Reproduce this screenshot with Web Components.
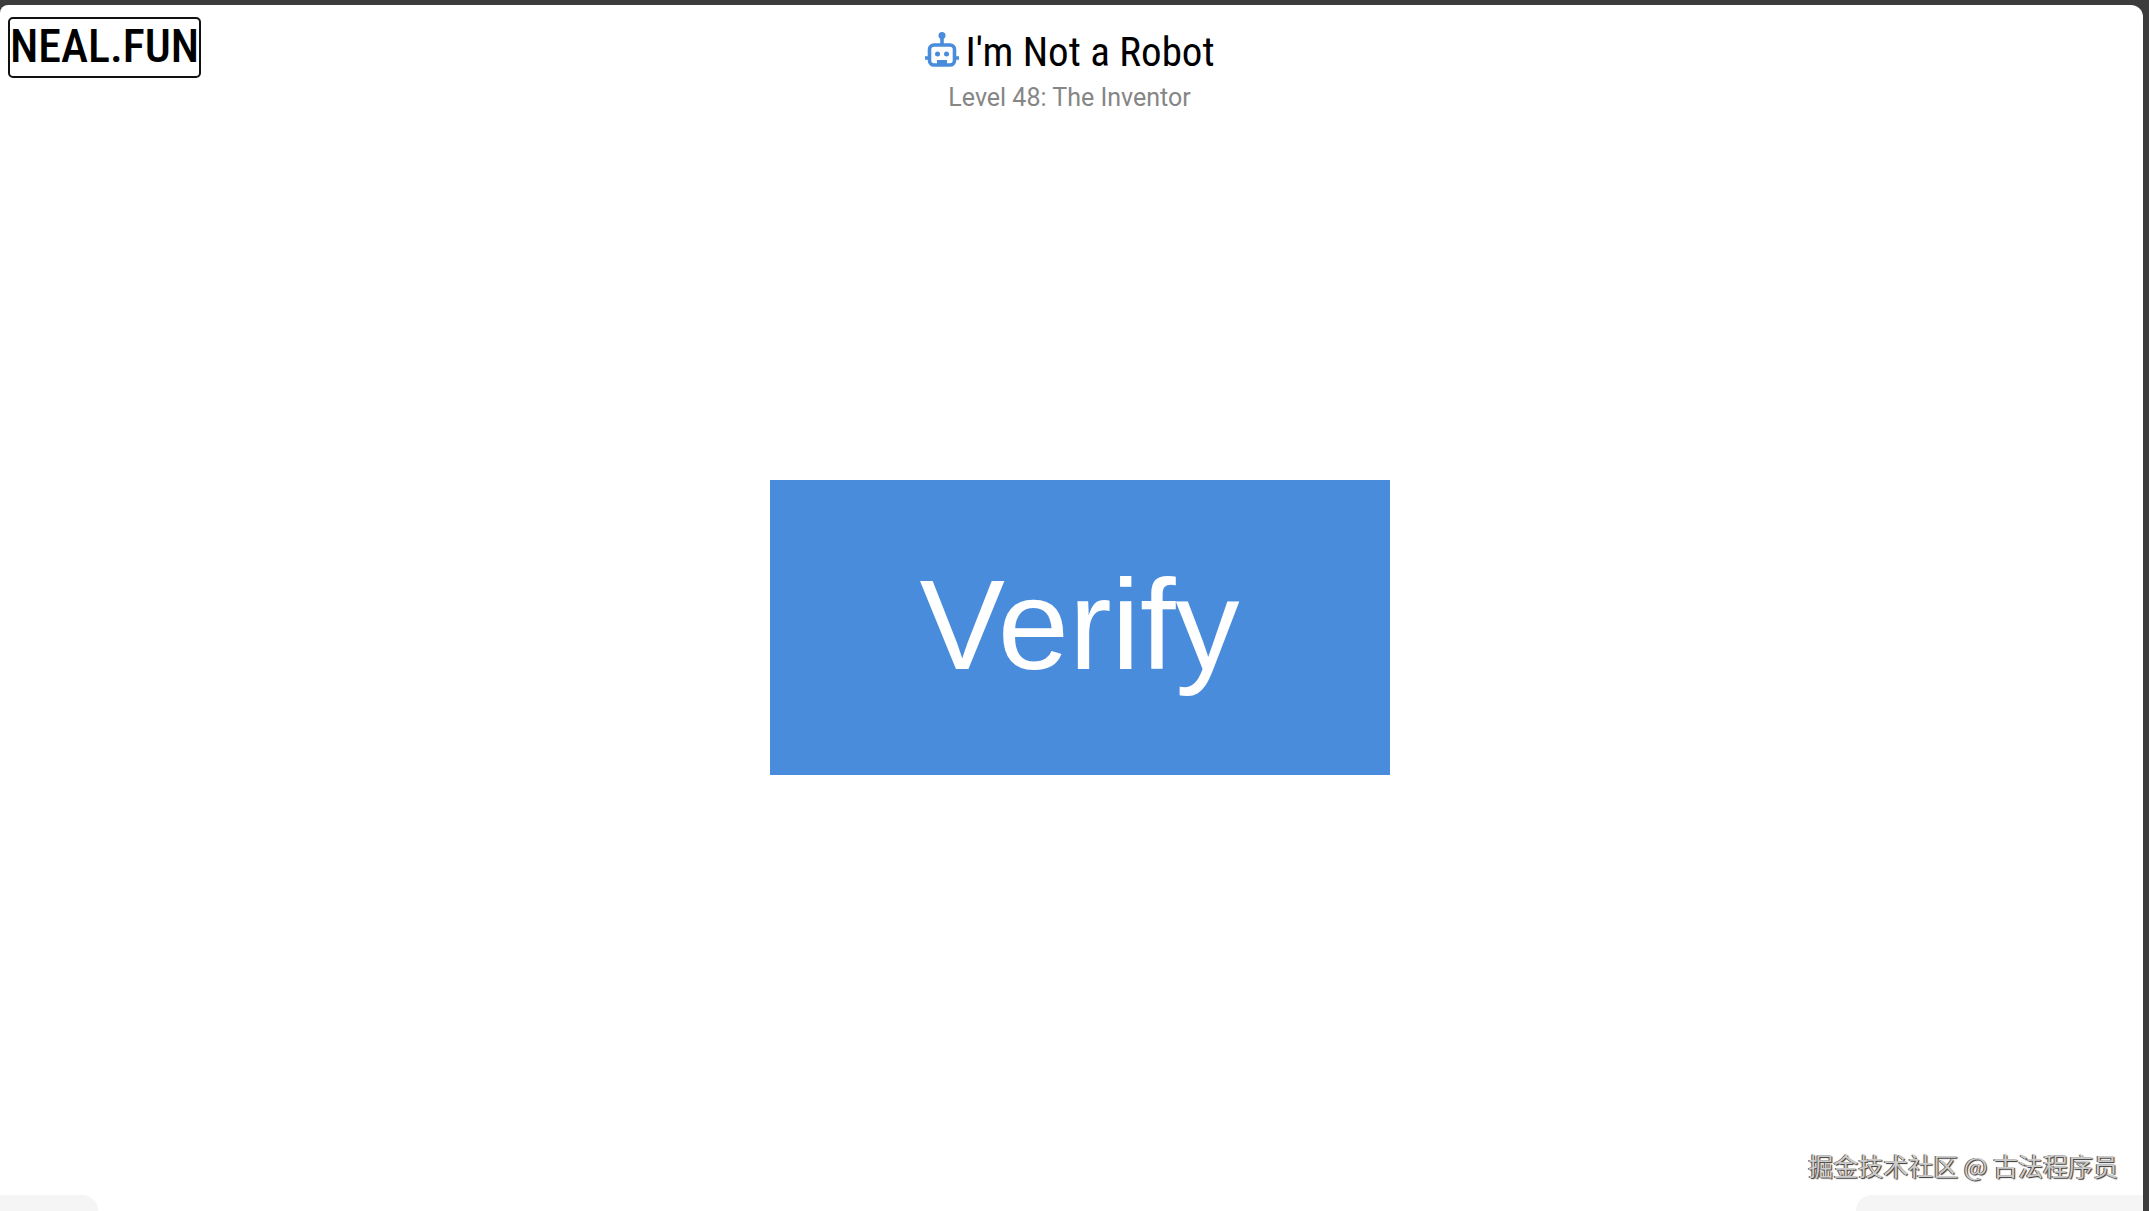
<!DOCTYPE html>
<html lang="en">
<head>
<meta charset="utf-8">
<title>I'm Not a Robot</title>
<style>
html, body { height: 100%; }
body { margin: 0; background: #3c3c3c; font-family: Roboto, "Liberation Sans", sans-serif; }
</style>
</head>
<body>
<robot-page>
  <neal-logo slot="logo"></neal-logo>
  <level-title slot="title" subtitle="Level 48: The Inventor">I'm Not a Robot</level-title>
  <verify-button>Verify</verify-button>
  <author-mark slot="mark">掘金技术社区 @ 古法程序员</author-mark>
</robot-page>
<script>
const define = (name, html, init) => customElements.define(name, class extends HTMLElement {
  constructor() {
    super();
    this.attachShadow({ mode: 'open' }).innerHTML = html;
  }
  connectedCallback() { if (init) init(this); }
});

define('robot-page', `
<style>
:host { display: flex; box-sizing: border-box; min-height: 100vh; padding: 5px 6px 0 0; }
.sheet { flex: 1; display: flex; flex-direction: column; background: #fff; border-radius: 8px 12px 0 0; overflow: hidden; }
header { display: grid; grid-template-columns: 1fr auto 1fr; align-items: start; padding: 12px 12px 0 8px; }
main { flex: 1; display: flex; align-items: center; justify-content: center; padding: 0 0 12px 16px; }
.mark { display: flex; justify-content: flex-end; padding: 0 25px 12px 0; }
footer { display: flex; justify-content: space-between; }
.tab { height: 16px; background: #f5f5f5; }
.left { width: 98px; border-radius: 0 16px 0 0; }
.right { width: 287px; border-radius: 16px 0 0 0; }
</style>
<div class="sheet">
  <header><slot name="logo"></slot><slot name="title"></slot></header>
  <main><slot></slot></main>
  <div class="mark"><slot name="mark"></slot></div>
  <footer><div class="tab left"></div><div class="tab right"></div></footer>
</div>`);

define('neal-logo', `
<style>
:host { display: flex; }
a { box-sizing: border-box; display: flex; align-items: center; justify-content: center; width: 193px; height: 61px; padding-bottom: 4px; border: 2px solid #111; border-radius: 5px; color: #000; text-decoration: none; font: 500 46px/1 "Roboto Condensed", Roboto, sans-serif; }
</style>
<a href="#">NEAL.FUN</a>`);

define('level-title', `
<style>
:host { display: flex; flex-direction: column; align-items: center; padding-top: 11px; }
.row { display: flex; align-items: flex-start; gap: 5px; }
svg { width: 36px; height: 40px; display: block; }
h1 { margin: 0; font: 400 41px/48px "Roboto Condensed", Roboto, sans-serif; color: #000; }
p { margin: 0; font-size: 25px; line-height: 43px; color: #868686; }
</style>
<div class="row">
  <svg viewBox="0 0 36 40" fill="none" stroke="#488cdb" stroke-width="3.6" aria-hidden="true">
    <path d="M18 7v10M5 30H1M31 30H35"/>
    <rect x="5.500" y="17" width="25" height="20" rx="4.500"/>
    <g fill="#488cdb" stroke="none"><circle cx="18" cy="7.500" r="3.500"/><circle cx="13.500" cy="26" r="2.500"/><circle cx="22.500" cy="26" r="2.500"/><path d="M13 32h10v6H13z"/></g>
  </svg>
  <h1><slot></slot></h1>
</div>
<p></p>`, el => { el.shadowRoot.querySelector('p').textContent = el.getAttribute('subtitle'); });

define('verify-button', `
<style>
:host { display: block; }
button { width: 620px; height: 295px; padding: 0 0 4px; border: 0; background: #488cdb; color: #fff; font: 128px/1 "Liberation Sans", Arial, sans-serif; cursor: pointer; }
</style>
<button type="button"><slot></slot></button>`);

define('author-mark', `
<style>
:host { display: block; font: 25px/36px "Noto Sans CJK SC", sans-serif; color: #ccc; text-shadow: -1px 0 0 #555, 1px 1px 1px #333; }
</style>
<slot></slot>`);
</script>
</body>
</html>
